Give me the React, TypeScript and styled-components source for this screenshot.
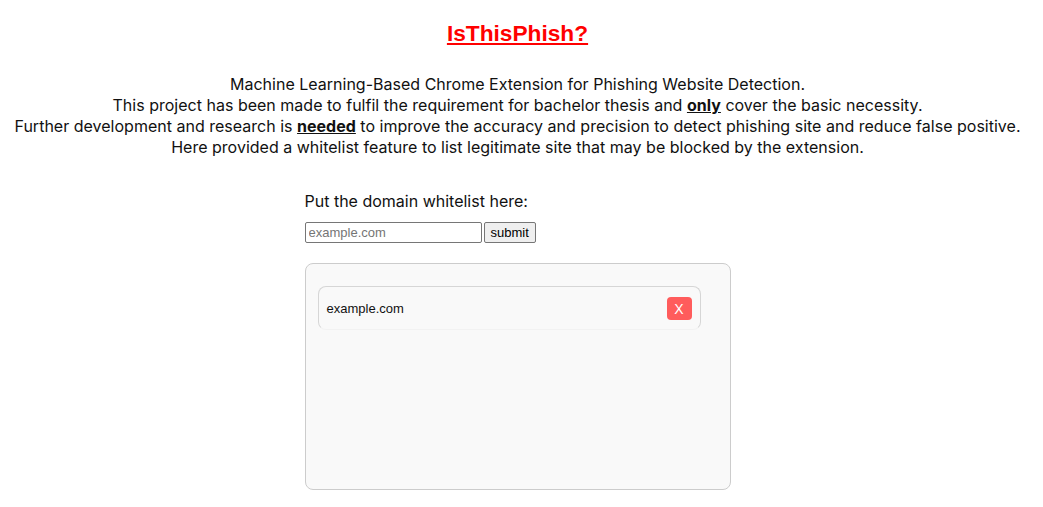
import React, { useState } from "react";
import styled, { createGlobalStyle } from "styled-components";

const GlobalStyle = createGlobalStyle`
  body {
    margin: 0;
    background: #ffffff;
    font-family: "Inter", "Noto Sans", sans-serif;
    color: #111111;
  }
`;

const Page = styled.div`
  display: flex;
  flex-direction: column;
  align-items: center;
  padding: 18px 8px 0 0;
`;

const Title = styled.h1`
  margin: 0;
  font-family: "Liberation Sans", Arial, sans-serif;
  font-size: 22.7px;
  font-weight: 700;
  color: #ff0000;
  text-decoration: underline;
  line-height: 30px;
`;

const Intro = styled.div`
  margin-top: 26px;
  text-align: center;
  font-size: 16px;
  line-height: 21px;
  letter-spacing: 0.01px;
  white-space: nowrap;
`;

const Strong = styled.b`
  text-decoration: underline;
  font-weight: 700;
`;

const Section = styled.div`
  width: 426px;
  margin-top: 32px;
`;

const Label = styled.div`
  font-size: 16px;
  line-height: 22px;
`;

const Form = styled.form`
  display: flex;
  align-items: center;
  gap: 2px;
  margin-top: 10px;
`;

const Input = styled.input`
  box-sizing: border-box;
  width: 177px;
  height: 21px;
  padding: 1px 3px;
  border: 1px solid #767676;
  border-radius: 2px;
  font-family: "Liberation Sans", Arial, sans-serif;
  font-size: 13px;
  &::placeholder {
    color: #757575;
  }
`;

const Button = styled.button`
  box-sizing: border-box;
  height: 21px;
  padding: 1px 6px;
  border: 1px solid #767676;
  border-radius: 2px;
  background: #efefef;
  font-family: "Liberation Sans", Arial, sans-serif;
  font-size: 13px;
  color: #000;
`;

const ListBox = styled.div`
  box-sizing: border-box;
  width: 426px;
  height: 227px;
  margin-top: 20px;
  padding: 22px 12px;
  border: 1px solid #cccccc;
  border-radius: 8px;
  background: #f9f9f9;
`;

const Item = styled.div`
  box-sizing: border-box;
  display: flex;
  align-items: center;
  justify-content: space-between;
  width: 383px;
  height: 44px;
  padding: 1px 8px 0 8px;
  border: 1px solid #d6d6d6;
  border-bottom-color: #f2f2f2;
  border-radius: 8px;
`;

const ItemText = styled.span`
  font-family: "Liberation Sans", Arial, sans-serif;
  font-size: 13px;
  color: #111;
`;

const Remove = styled.button`
  width: 25px;
  height: 23px;
  padding: 0;
  border: none;
  border-radius: 4px;
  background: #ff5c5c;
  color: #ffffff;
  font-family: "Liberation Sans", Arial, sans-serif;
  font-size: 14px;
`;

export default function App() {
  const [items, setItems] = useState<string[]>(["example.com"]);
  const [value, setValue] = useState("");

  return (
    <Page>
      <GlobalStyle />
      <Title>IsThisPhish?</Title>
      <Intro>
        Machine Learning-Based Chrome Extension for Phishing Website Detection.
        <br />
        This project has been made to fulfil the requirement for bachelor thesis
        and <Strong>only</Strong> cover the basic necessity.
        <br />
        Further development and research is <Strong>needed</Strong> to improve
        the accuracy and precision to detect phishing site and reduce false
        positive.
        <br />
        Here provided a whitelist feature to list legitimate site that may be
        blocked by the extension.
      </Intro>
      <Section>
        <Label>Put the domain whitelist here:</Label>
        <Form
          onSubmit={(e) => {
            e.preventDefault();
            if (value.trim()) setItems([...items, value.trim()]);
            setValue("");
          }}
        >
          <Input
            placeholder="example.com"
            value={value}
            onChange={(e) => setValue(e.target.value)}
          />
          <Button type="submit">submit</Button>
        </Form>
        <ListBox>
          {items.map((item, i) => (
            <Item key={item + i}>
              <ItemText>{item}</ItemText>
              <Remove onClick={() => setItems(items.filter((_, j) => j !== i))}>
                X
              </Remove>
            </Item>
          ))}
        </ListBox>
      </Section>
    </Page>
  );
}
